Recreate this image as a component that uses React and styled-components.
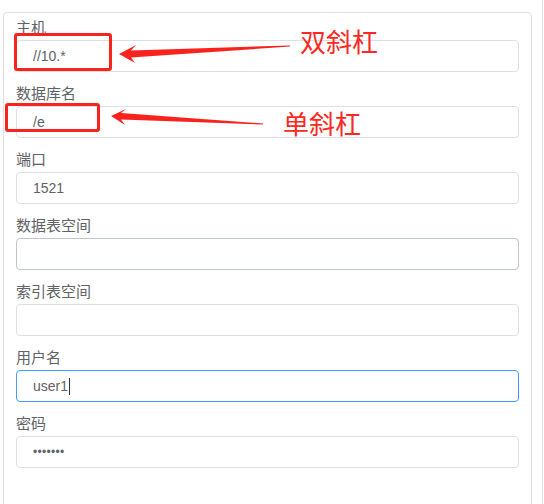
import React from "react"
import styled, { createGlobalStyle } from "styled-components"

const Global = createGlobalStyle`
  html, body {
    margin: 0;
    padding: 0;
    background: #fff;
  }
  body {
    font-family: "Liberation Sans", "Noto Sans CJK SC", sans-serif;
  }
`

const Page = styled.div`
  position: relative;
  width: 543px;
  height: 504px;
  box-sizing: border-box;
  border-right: 1px solid #e4e4e4;
  padding: 12px 0 0 3px;
  overflow: hidden;
`

const Panel = styled.div`
  width: 529px;
  box-sizing: border-box;
  border: 1px solid #dcdfe6;
  border-radius: 4px;
  padding: 3px 12px 60px 12px;
  display: flex;
  flex-direction: column;
  gap: 10px;
`

const Field = styled.div`
  display: flex;
  flex-direction: column;
  gap: 2px;
`

const Label = styled.div`
  font-family: "Noto Sans CJK SC", sans-serif;
  font-size: 15px;
  line-height: 22px;
  color: #606266;
`

const borderColors = {
  normal: "#dcdfe6",
  hover: "#c0c4cc",
  focus: "#409eff",
}

const Input = styled.div`
  height: 32px;
  box-sizing: border-box;
  border: 1px solid ${p => borderColors[p.$state || "normal"]};
  border-radius: 4px;
  padding: 0 16px;
  font-family: "Liberation Sans", sans-serif;
  font-size: 14px;
  color: #606266;
  display: flex;
  align-items: center;
`

const Dots = styled.span`
  font-size: 12px;
  letter-spacing: 0.3px;
  color: #606266;
`

const Caret = styled.span`
  display: inline-block;
  width: 1px;
  height: 17px;
  background: #303133;
  margin-left: 1px;
`

const Mark = styled.div`
  position: absolute;
  left: ${p => p.$x}px;
  top: ${p => p.$y}px;
  width: ${p => p.$w}px;
  height: ${p => p.$h}px;
  box-sizing: border-box;
  border: 3.5px solid #f8231d;
  border-radius: 3px;
`

const Note = styled.div`
  position: absolute;
  left: ${p => p.$x}px;
  top: ${p => p.$y}px;
  font-family: "Noto Sans CJK SC", sans-serif;
  font-size: 26px;
  line-height: 26px;
  color: #fa2a22;
`

const Arrows = styled.svg`
  position: absolute;
  left: 0;
  top: 0;
  pointer-events: none;
`

const fields = [
  { label: "主机", value: "//10.*" },
  { label: "数据库名", value: "/e" },
  { label: "端口", value: "1521" },
  { label: "数据表空间", value: "", state: "hover" },
  { label: "索引表空间", value: "" },
  { label: "用户名", value: "user1", state: "focus", caret: true },
  { label: "密码", password: true },
]

export default () => {
  return (
    <>
      <Global />
      <Page>
        <Panel>
          {fields.map(f => (
            <Field key={f.label}>
              <Label>{f.label}</Label>
              <Input $state={f.state}>
                {f.password ? <Dots>•••••••</Dots> : f.value}
                {f.caret && <Caret />}
              </Input>
            </Field>
          ))}
        </Panel>

        <Mark $x={14} $y={33} $w={98} $h={38} />
        <Mark $x={5} $y={103} $w={95} $h={29} />

        <Arrows width="544" height="504" viewBox="0 0 544 504">
          <polygon
            fill="#f8231d"
            points="119,54 136,45 131,50.5 290,45.4 290,46.6 131,57.5 135,63"
          />
          <polygon
            fill="#f8231d"
            points="111,116 126,109 121,113 263,123.4 263,124.6 121,119.5 125,125"
          />
        </Arrows>

        <Note $x={300} $y={28}>双斜杠</Note>
        <Note $x={283} $y={110}>单斜杠</Note>
      </Page>
    </>
  )
}
